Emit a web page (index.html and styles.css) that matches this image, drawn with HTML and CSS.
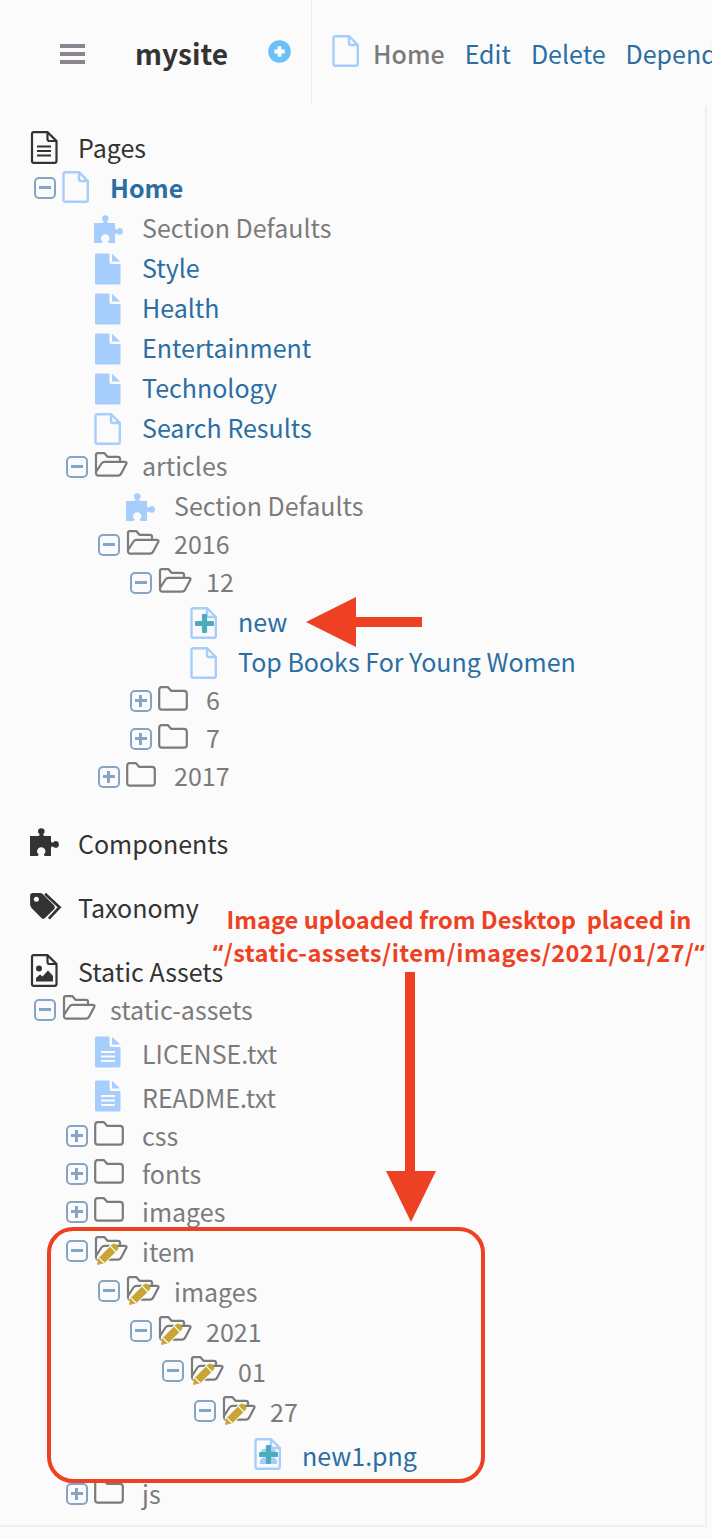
FILE: index.html
```html
<!DOCTYPE html>
<html lang="en">
<head>
	<meta charset="UTF-8">
	<title>mysite</title>
	<link rel="stylesheet" href="styles.css">
</head>
<body>
	<svg class="defs" width="0" height="0">
		<symbol id="page" viewBox="0 0 27 32">
			<path d="M1.5 3 Q1.5 1.2 3.5 1.2 H17 L25.8 10 V29 Q25.8 30.8 24 30.8 H3.5 Q1.5 30.8 1.5 29 Z M17 1.5 V8 Q17 10 19 10 H25.5" fill="none" stroke="currentColor" stroke-width="2.4"/>
		</symbol>
		<symbol id="pageFill" viewBox="0 0 27 32">
			<path d="M1 2 Q1 .5 2.5 .5 H15.5 V9 Q15.5 11 17.5 11 H26.5 V30 Q26.5 31.5 25 31.5 H2.5 Q1 31.5 1 30 Z M18 .8 L26.2 8.5 H18 Z" fill="currentColor"/>
		</symbol>
		<symbol id="doc" viewBox="0 0 27 32">
			<path d="M1 2 Q1 .5 2.5 .5 H15.5 V9 Q15.5 11 17.5 11 H26.5 V30 Q26.5 31.5 25 31.5 H2.5 Q1 31.5 1 30 Z M18 .8 L26.2 8.5 H18 Z" fill="currentColor"/>
			<path d="M7 16 H21 M7 20.5 H21 M7 25 H21" stroke="#fbfbfb" stroke-width="2.2"/>
		</symbol>
		<symbol id="docOutline" viewBox="0 0 28 33">
			<path d="M2 3 Q2 1.2 3.8 1.2 H17.5 L26.5 10 V30 Q26.5 31.8 24.7 31.8 H3.8 Q2 31.8 2 30 Z M17.5 1.5 V8 Q17.5 10 19.5 10 H26" fill="none" stroke="currentColor" stroke-width="2.2"/>
			<path d="M7 15.5 H21 M7 20 H21 M7 24.5 H21" stroke="currentColor" stroke-width="2.2"/>
		</symbol>
		<symbol id="imageOutline" viewBox="0 0 28 33">
			<path d="M2 3 Q2 1.2 3.8 1.2 H17.5 L26.5 10 V30 Q26.5 31.8 24.7 31.8 H3.8 Q2 31.8 2 30 Z M17.5 1.5 V8 Q17.5 10 19.5 10 H26" fill="none" stroke="currentColor" stroke-width="2.2"/>
			<circle cx="9" cy="14.5" r="3" fill="currentColor"/>
			<path d="M6 27.5 V24 L10 20.5 L12.5 22.5 L18 16.5 L23 22 V27.5 Z" fill="currentColor"/>
		</symbol>
		<symbol id="puzzle" viewBox="0 0 30 28">
			<path d="M0 8 H7.5 Q10 8 9.5 6 Q8 5 8 3.5 A3.3 3.3 0 0 1 14.6 3.5 Q14.6 5 13.2 6 Q12.8 8 15 8 H21 V13 Q21 15 23 14.5 Q24 13 25.5 13 A3.4 3.4 0 0 1 25.5 19.8 Q24 19.8 23 18.5 Q21 18 21 20 V28 H15.5 Q13.5 28 14 26 Q15.5 25 15.5 23.5 A4.2 4.2 0 0 0 7 23.5 Q7 25 8.5 26 Q9 28 7 28 H0 Z" fill="currentColor"/>
		</symbol>
		<symbol id="tags" viewBox="0 0 34 28">
			<path d="M0 3 Q0 0 3 0 H10 Q12 0 13.5 1.5 L25 13 Q26.5 15 25 16.5 L15.5 26 Q13.5 27.7 11.7 26 L1.5 15.5 Q0 14 0 12 Z" fill="currentColor"/>
			<circle cx="6.5" cy="6.5" r="2.6" fill="#fbfbfb"/>
			<path d="M15.5 0.8 L30.5 14.8 L19.5 26.5" fill="none" stroke="currentColor" stroke-width="2.8"/>
		</symbol>
		<symbol id="folderOpen" viewBox="0 0 34 25">
			<path d="M2 19 V3 Q2 1.2 3.8 1.2 H10.5 L13.5 4.8 H24 Q26 4.8 26 6.8 V9.8 M2 20 L7.5 11.5 Q8.6 9.8 10.5 9.8 H30.5 Q33.3 9.8 32.2 12 L27.5 21 Q26.2 23.6 24 23.6 H4 Q1.8 23.6 2 20 Z" fill="none" stroke="currentColor" stroke-width="2.2" stroke-linejoin="round"/>
		</symbol>
		<symbol id="folder" viewBox="0 0 30 25">
			<path d="M1.2 4 Q1.2 1.2 3.5 1.2 H10 L13 4.8 H26 Q28.8 4.8 28.8 7.5 V21 Q28.8 23.6 26 23.6 H3.8 Q1.2 23.6 1.2 21 Z" fill="none" stroke="currentColor" stroke-width="2.2" stroke-linejoin="round"/>
		</symbol>
		<symbol id="pencil" viewBox="0 0 34 30">
			<path d="M6 26 L21 11" stroke="#fbfbfb" stroke-width="10"/>
			<path d="M3 29 L4 22.5 L17 9.5 L19 7.8 Q20.2 7 21.5 8.2 L24 10.8 Q25 12 24 13.2 L22.5 15 L10 27.5 Z" fill="#c9a634"/>
			<path d="M5 22 L10.5 27.5" stroke="#fbfbfb" stroke-width="1.1"/>
			<path d="M16.5 10.5 L22 16" stroke="#fbfbfb" stroke-width="1.1"/>
		</symbol>
		<symbol id="plusMark" viewBox="0 0 20 20">
			<path d="M10 2 V18 M2 10 H18" stroke="#4bacbd" stroke-width="5.5" stroke-linecap="round"/>
		</symbol>
	</svg>

	<div class="topbar">
		<div class="brand">
			<span class="burger"><i></i><i></i><i></i></span>
			<span class="siteName">mysite</span>
			<svg class="addSite" viewBox="0 0 24 24"><circle cx="12" cy="12" r="11.8" fill="#6cc0f8"/><path d="M12 6.5 V17.5 M6.5 12 H17.5" stroke="#fbfbfb" stroke-width="4"/></svg>
		</div>
		<div class="crumbs">
			<svg class="icon page"><use href="#page"/></svg>
			<span class="crumbTitle">Home</span>
			<a>Edit</a>
			<a>Delete</a>
			<a>Dependencies</a>
		</div>
	</div>

	<div class="panel">
		<div class="section pages">
			<div class="heading"><svg class="icon headIcon"><use href="#docOutline"/></svg><span>Pages</span></div>
			<ul class="tree">
				<li class="row">
					<span class="toggle minus"></span>
					<svg class="icon page up"><use href="#page"/></svg>
					<a class="strong">Home</a>
				</li>
				<li>
					<ul>
						<li class="row"><span class="toggle none"></span><svg class="icon puzzle"><use href="#puzzle"/></svg><span>Section Defaults</span></li>
						<li class="row"><span class="toggle none"></span><svg class="icon page"><use href="#pageFill"/></svg><a>Style</a></li>
						<li class="row"><span class="toggle none"></span><svg class="icon page"><use href="#pageFill"/></svg><a>Health</a></li>
						<li class="row"><span class="toggle none"></span><svg class="icon page"><use href="#pageFill"/></svg><a>Entertainment</a></li>
						<li class="row"><span class="toggle none"></span><svg class="icon page"><use href="#pageFill"/></svg><a>Technology</a></li>
						<li class="row"><span class="toggle none"></span><svg class="icon page"><use href="#page"/></svg><a>Search Results</a></li>
						<li class="row dir"><span class="toggle minus"></span><svg class="icon folderIcon"><use href="#folderOpen"/></svg><span>articles</span></li>
						<li>
							<ul>
								<li class="row"><span class="toggle none"></span><svg class="icon puzzle"><use href="#puzzle"/></svg><span>Section Defaults</span></li>
								<li class="row dir"><span class="toggle minus"></span><svg class="icon folderIcon"><use href="#folderOpen"/></svg><span>2016</span></li>
								<li>
									<ul>
										<li class="row dir"><span class="toggle minus"></span><svg class="icon folderIcon"><use href="#folderOpen"/></svg><span>12</span></li>
										<li>
											<ul>
												<li class="row">
													<span class="toggle none"></span>
													<span class="stack">
														<svg class="icon page"><use href="#page"/></svg>
														<svg class="plus"><use href="#plusMark"/></svg>
													</span>
													<a>new</a>
												</li>
												<li class="row"><span class="toggle none"></span><svg class="icon page"><use href="#page"/></svg><a>Top Books For Young Women</a></li>
											</ul>
										</li>
										<li class="row dir"><span class="toggle add"></span><svg class="icon folderIcon shut"><use href="#folder"/></svg><span>6</span></li>
										<li class="row dir"><span class="toggle add"></span><svg class="icon folderIcon shut"><use href="#folder"/></svg><span>7</span></li>
									</ul>
								</li>
								<li class="row dir"><span class="toggle add"></span><svg class="icon folderIcon shut"><use href="#folder"/></svg><span>2017</span></li>
							</ul>
						</li>
					</ul>
				</li>
			</ul>
		</div>

		<div class="section gapBig">
			<div class="heading"><svg class="icon headIcon headPuzzle"><use href="#puzzle"/></svg><span>Components</span></div>
		</div>
		<div class="section">
			<div class="heading"><svg class="icon headIcon headTags"><use href="#tags"/></svg><span>Taxonomy</span></div>
		</div>
		<div class="section">
			<div class="heading tight"><svg class="icon headIcon"><use href="#imageOutline"/></svg><span>Static Assets</span></div>
			<ul class="tree">
				<li class="row dir"><span class="toggle minus"></span><svg class="icon folderIcon"><use href="#folderOpen"/></svg><span>static-assets</span></li>
				<li>
					<ul>
						<li class="row file"><span class="toggle none"></span><svg class="icon page"><use href="#doc"/></svg><span>LICENSE.txt</span></li>
						<li class="row file"><span class="toggle none"></span><svg class="icon page"><use href="#doc"/></svg><span>README.txt</span></li>
						<li class="row dir"><span class="toggle add"></span><svg class="icon folderIcon shut"><use href="#folder"/></svg><span>css</span></li>
						<li class="row dir"><span class="toggle add"></span><svg class="icon folderIcon shut"><use href="#folder"/></svg><span>fonts</span></li>
						<li class="row dir"><span class="toggle add"></span><svg class="icon folderIcon shut"><use href="#folder"/></svg><span>images</span></li>
						<li class="row"><span class="toggle minus"></span><span class="stack up"><svg class="icon folderIcon"><use href="#folderOpen"/></svg><svg class="pen"><use href="#pencil"/></svg></span><span>item</span></li>
						<li>
							<ul>
								<li class="row"><span class="toggle minus"></span><span class="stack up"><svg class="icon folderIcon"><use href="#folderOpen"/></svg><svg class="pen"><use href="#pencil"/></svg></span><span>images</span></li>
								<li>
									<ul>
										<li class="row"><span class="toggle minus"></span><span class="stack up"><svg class="icon folderIcon"><use href="#folderOpen"/></svg><svg class="pen"><use href="#pencil"/></svg></span><span>2021</span></li>
										<li>
											<ul>
												<li class="row"><span class="toggle minus"></span><span class="stack up"><svg class="icon folderIcon"><use href="#folderOpen"/></svg><svg class="pen"><use href="#pencil"/></svg></span><span>01</span></li>
												<li>
													<ul>
														<li class="row"><span class="toggle minus"></span><span class="stack up"><svg class="icon folderIcon"><use href="#folderOpen"/></svg><svg class="pen"><use href="#pencil"/></svg></span><span>27</span></li>
														<li>
															<ul>
																<li class="row file">
																	<span class="toggle none"></span>
																	<span class="stack">
																		<svg class="icon page"><use href="#page"/></svg>
																		<svg class="blobs" viewBox="0 0 20 20"><circle cx="6" cy="7" r="4" fill="#a6cdfb"/><circle cx="14" cy="7" r="4" fill="#a6cdfb"/><path d="M1 17 Q1 12 6 12 H14 Q19 12 19 17 V19 H1 Z" fill="#a6cdfb"/></svg>
																		<svg class="plus"><use href="#plusMark"/></svg>
																	</span>
																	<a>new1.png</a>
																</li>
															</ul>
														</li>
													</ul>
												</li>
											</ul>
										</li>
									</ul>
								</li>
							</ul>
						</li>
						<li class="row dir"><span class="toggle add"></span><svg class="icon folderIcon shut"><use href="#folder"/></svg><span>js</span></li>
					</ul>
				</li>
			</ul>
		</div>
	</div>

	<!-- annotations drawn on top of the screenshot -->
	<svg class="arrowNew" viewBox="0 0 116 50"><path d="M0 25 L50 0 V20 H116 V30 H50 V50 Z" fill="#ee4124"/></svg>
	<p class="note">Image uploaded from Desktop&nbsp; placed in<br><span class="notePath"><span class="quote">“</span>/static-assets/item/images/2021/01/27/<span class="quote">“</span></span></p>
	<svg class="arrowDown" viewBox="0 0 50 250"><path d="M19 0 H29 V199 H50 L25 250 L0 199 H19 Z" fill="#ee4124"/></svg>
	<div class="frame"></div>
</body>
</html>
```

FILE: styles.css
```css
*{
	box-sizing: border-box;
}
html,body{
	margin: 0;
	padding: 0;
}
body{
	width: 712px;
	height: 1538px;
	overflow: hidden;
	position: relative;
	background: #fbfbfb;
	color: #7b7b7b;
	font-family: "Noto Sans CJK SC", "Noto Sans", sans-serif;
	font-size: 25px;
}
a{
	color: #2a6ea3;
}
ul{
	list-style: none;
	margin: 0;
	padding: 0 0 0 32px;
}
.defs{
	position: absolute;
}
.topbar{
	display: flex;
	height: 104px;
}
.brand{
	flex: none;
	display: flex;
	align-items: center;
	width: 312px;
	padding: 0 0 0 60px;
	border-right: 1px solid #ececec;
}
.burger{
	display: flex;
	flex-direction: column;
	gap: 4px;
	width: 25px;
	margin-top: 4px;
}
.burger i{
	height: 4px;
	background: #8a8490;
}
.siteName{
	margin-left: 50px;
	margin-top: 2px;
	color: #333;
	font-size: 28px;
	font-weight: 700;
	line-height: 38px;
}
.addSite{
	width: 23px;
	height: 23px;
	margin: -1px 0 0 40px;
}
.crumbs{
	display: flex;
	align-items: center;
	gap: 20px;
	padding-left: 20px;
	line-height: 36px;
	white-space: nowrap;
}
.crumbs > span,
.crumbs > a{
	margin-top: 2px;
}
.crumbs .page{
	margin-right: -6px;
	margin-top: -3px;
}
.crumbTitle{
	font-weight: 500;
}
.panel{
	width: 707px;
	height: 1422px;
	padding-top: 23px;
	border-top: 1px solid transparent;
	border-right: 2px solid #efefef;
	border-bottom: 2px solid #efefef;
	margin-top: 1px;
}
.section{
	margin-top: 24px;
}
.section:first-child{
	margin-top: 0;
}
.gapBig{
	margin-top: 28px;
}
.heading{
	display: flex;
	align-items: center;
	height: 40px;
	padding-left: 30px;
	color: #333;
}
.heading.tight{
	height: 39px;
}
.heading > span{
	margin-bottom: 4px;
}
.headIcon{
	width: 28px;
	height: 33px;
	margin-right: 20px;
	margin-bottom: 4px;
	color: #333;
}
.headPuzzle{
	width: 30px;
	height: 28px;
	margin-right: 18px;
	margin-bottom: 6px;
}
.headTags{
	width: 33px;
	height: 27px;
	margin-right: 15px;
	margin-bottom: 6px;
}
.tree{
	padding-left: 34px;
}
.row{
	display: flex;
	align-items: center;
	height: 40px;
	line-height: 36px;
	white-space: nowrap;
}
.row.dir{
	height: 38px;
}
.row.file{
	height: 44px;
}
.row > span:last-child,
.row > a{
	margin-bottom: 4px;
}
.pages .row.dir > span:last-child{
	margin-bottom: 6px;
}
.row > .stack.up + span{
	margin-bottom: 2px;
}
.row.file > span:last-child,
.row.file > a{
	padding-top: 6px;
}
.strong{
	font-weight: 700;
}
.toggle{
	flex: none;
	position: relative;
	width: 22px;
	height: 22px;
	margin-right: 6px;
	margin-bottom: 2px;
	border: 2px solid #86a5c6;
	border-radius: 5px;
}
.toggle.none{
	visibility: hidden;
}
.toggle.minus::before,
.toggle.add::before{
	content: "";
	position: absolute;
	left: 3px;
	right: 3px;
	top: 7px;
	height: 3px;
	background: #86a5c6;
}
.toggle.add::after{
	content: "";
	position: absolute;
	top: 3px;
	bottom: 3px;
	left: 7px;
	width: 3px;
	background: #86a5c6;
}
.icon{
	flex: none;
}
.page{
	width: 27px;
	height: 32px;
	margin-right: 21px;
	color: #a6cdfb;
}
.up{
	margin-bottom: 4px;
}
.puzzle{
	width: 30px;
	height: 28px;
	margin-right: 18px;
	color: #a6cdfb;
}
.folderIcon{
	width: 34px;
	height: 25px;
	margin-right: 14px;
	margin-bottom: 8px;
	color: #7b7b7b;
}
.shut{
	width: 30px;
	margin-right: 18px;
}
.stack{
	flex: none;
	position: relative;
	display: flex;
}
.stack .folderIcon{
	margin-bottom: 0;
}
.stack.up{
	margin-bottom: 8px;
}
.pen{
	position: absolute;
	left: 0;
	top: 0;
	width: 34px;
	height: 30px;
}
.plus{
	position: absolute;
	left: 5px;
	top: 7px;
	width: 19px;
	height: 19px;
}
.blobs{
	position: absolute;
	left: 5px;
	top: 8px;
	width: 19px;
	height: 19px;
}
.arrowNew{
	position: absolute;
	left: 306px;
	top: 597px;
	width: 116px;
	height: 50px;
}
.arrowDown{
	position: absolute;
	left: 386px;
	top: 972px;
	width: 50px;
	height: 250px;
}
.note{
	position: absolute;
	left: 209px;
	top: 903px;
	width: 500px;
	margin: 0;
	color: #ee4124;
	font-size: 23.6px;
	font-weight: 700;
	line-height: 33px;
	text-align: center;
	white-space: nowrap;
}
.notePath{
	letter-spacing: .4px;
}
.quote{
	font-family: "Open Sans", sans-serif;
}
.frame{
	position: absolute;
	left: 47px;
	top: 1227px;
	width: 438px;
	height: 256px;
	border: 4px solid #ee4124;
	border-radius: 26px;
}
```
